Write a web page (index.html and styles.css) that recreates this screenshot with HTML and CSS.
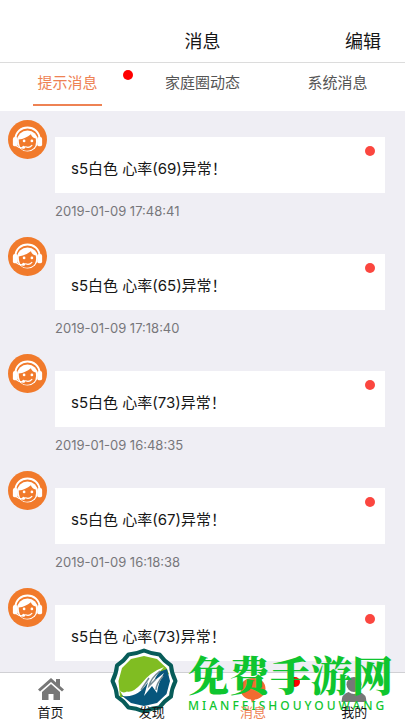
FILE: index.html
```
<!DOCTYPE html>
<html lang="zh-CN">
<head>
<meta charset="utf-8">
<meta name="viewport" content="width=device-width, initial-scale=1">
<title>消息</title>
<link rel="stylesheet" href="styles.css">
</head>
<body>
<svg class="defs" aria-hidden="true">
  <symbol id="agent" viewBox="0 0 40 40">
    <circle cx="20" cy="20" r="20" fill="#f17a2b"/>
    <path d="M7.500 20C8 3.500 32 3.500 32.500 20" fill="none" stroke="#fff" stroke-width="2"/>
    <circle cx="20" cy="21.500" r="10.800" fill="#fff"/>
    <path d="M11 20q7-1 12.500-5.500q1 3.500 5 4.500q1.500 9-4.500 11.500q-5 2-9 0q-4-3-4-10.500z" fill="#f17a2b"/>
    <rect x="5" y="17.500" width="5" height="9.500" rx="2" fill="#fff"/>
    <rect x="30" y="17.500" width="5" height="9.500" rx="2" fill="#fff"/>
    <circle cx="16.500" cy="21.500" r="1.400" fill="#fff"/>
    <circle cx="24.500" cy="21.500" r="1.400" fill="#fff"/>
    <path d="M8 26q3 3 8 2.500M18 27.500q4 1.500 6.500-1.500" fill="none" stroke="#fff" stroke-width="1.200" stroke-linecap="round"/>
    <circle cx="16" cy="28" r="1.600" fill="#fff"/>
  </symbol>
</svg>
<div class="app">
  <header class="header">
    <h1 class="title">消息</h1>
    <button class="edit" type="button">编辑</button>
  </header>
  <nav class="tabs">
    <a class="tab active" href="#tips"><span class="tab-label">提示消息</span><i class="tab-dot"></i></a>
    <a class="tab" href="#family"><span class="tab-label">家庭圈动态</span></a>
    <a class="tab" href="#system"><span class="tab-label">系统消息</span></a>
  </nav>
  <main class="list">
    <article class="item"><svg class="avatar"><use href="#agent"/></svg><div class="body"><p class="card">s5白色 心率(69)异常！<i class="dot"></i></p><time class="time">2019-01-09 17:48:41</time></div></article>
    <article class="item"><svg class="avatar"><use href="#agent"/></svg><div class="body"><p class="card">s5白色 心率(65)异常！<i class="dot"></i></p><time class="time">2019-01-09 17:18:40</time></div></article>
    <article class="item"><svg class="avatar"><use href="#agent"/></svg><div class="body"><p class="card">s5白色 心率(73)异常！<i class="dot"></i></p><time class="time">2019-01-09 16:48:35</time></div></article>
    <article class="item"><svg class="avatar"><use href="#agent"/></svg><div class="body"><p class="card">s5白色 心率(67)异常！<i class="dot"></i></p><time class="time">2019-01-09 16:18:38</time></div></article>
    <article class="item"><svg class="avatar"><use href="#agent"/></svg><div class="body"><p class="card">s5白色 心率(73)异常！<i class="dot"></i></p></div></article>
  </main>
  <nav class="bar">
    <a class="bar-item" href="#home">
      <svg class="bar-icon" viewBox="0 0 28 26"><path d="M14 1L1 12.500l2 2L14 5l11 9.500 2-2-4-3.500V2h-4v3.500z" fill="#777"/><path d="M5 15L14 7l9 8v8h-6.500v-6h-5v6H5z" fill="#777"/></svg>
      <span class="bar-label">首页</span>
    </a>
    <a class="bar-item" href="#discover">
      <span class="bar-icon"></span>
      <span class="bar-label">发现</span>
    </a>
    <a class="bar-item current" href="#messages">
      <svg class="bar-icon" viewBox="0 0 28 26"><path d="M14 1c7 0 12.500 4 12.500 10.500S21 22 16 22.500l-3 3.500-1-3.500C6 22 1.500 18 1.500 11.500S7 1 14 1z" fill="#f26b32"/></svg>
      <span class="bar-label">消息</span><i class="bar-dot"></i>
    </a>
    <a class="bar-item" href="#me">
      <svg class="bar-icon" viewBox="0 0 28 26"><circle cx="14" cy="7.500" r="7.500" fill="#777"/><path d="M1.500 25q0-8 7-10q5.500 4 11 0q7 2 7 10z" fill="#777"/></svg>
      <span class="bar-label">我的</span>
    </a>
  </nav>
  <div class="mark">
    <svg class="mark-logo" viewBox="0 0 68 66">
      <path d="M34 2.500Q42 6 49.500 6.500Q54 13 61 17.500Q61.500 25 65.500 33Q61.500 41 61 48.500Q54 53 49.500 59.500Q42 60 34 63.500Q26 60 18.500 59.500Q14 53 7 48.500Q6.500 41 2.500 33Q6.500 25 7 17.500Q14 13 18.500 6.500Q26 6 34 2.500z" fill="#fff" stroke="#075c59" stroke-width="4" stroke-linejoin="round"/>
      <path d="M34 8L47 11 56.500 20 59 26 45 34 35 49H10L8.500 33 12 20 21 11z" fill="#80bd22"/>
      <path d="M11 47q14 3 22-9 9-13 24-17l3 12-3.500 13L47 55 34 58 21 55z" fill="#07567c"/>
      <path d="M9.500 42Q12 46 17 43.500Q23 45 31 36Q40 24 54 19Q46 27 44 33L54 25Q48 35 47 45L42 38 34 48 38 34Q28 50 13 48z" fill="#fff"/>
      <path d="M50 23q-9 7-11 15l7-7M53 28q-7 8-7 14M39 30l-8 12" fill="none" stroke="#728b93" stroke-width="1.500"/>
    </svg>
    <div class="mark-text"><strong class="mark-name">免费手游网</strong><span class="mark-url">MIANFEISHOUYOUWANG</span></div>
  </div>
</div>
</body>
</html>
```

FILE: styles.css
```
* { box-sizing: border-box; }
body {
  margin: 0;
  font-family: Inter, "Noto Sans CJK SC", sans-serif;
  color: #161616;
  background: #fff;
}
a { color: inherit; text-decoration: none; }
.defs { position: absolute; width: 0; height: 0; }
.app {
  position: relative;
  display: flex;
  flex-direction: column;
  height: 100vh;
  overflow: hidden;
}
.header {
  display: grid;
  grid-template-columns: 1fr auto 1fr;
  align-items: center;
  padding: 18px 24px 0;
  height: 63px;
  flex: none;
  border-bottom: 1px solid #dcdcdc;
}
.title {
  grid-column: 2;
  margin: 0;
  font-size: 18px;
  font-weight: 400;
}
.edit {
  justify-self: end;
  padding: 0;
  border: 0;
  background: none;
  font: inherit;
  font-size: 18px;
  color: inherit;
}
.tabs { display: flex; flex: none; height: 48px; }
.tab {
  position: relative;
  flex: 1;
  display: flex;
  justify-content: center;
  align-items: flex-start;
  font-size: 15px;
  line-height: 40px;
  color: #555;
}
.tab-label { height: 43px; padding: 0 4px; }
.active { color: #ee8253; }
.active .tab-label { border-bottom: 2px solid #ee8253; }
.tab-dot, .dot, .bar-dot {
  position: absolute;
  width: 10px;
  height: 10px;
  border-radius: 50%;
  background: #f00;
}
.tab-dot { top: 7px; right: 2px; }
.list {
  flex: 1;
  min-height: 0;
  overflow: hidden;
  padding: 9px 20px 0 8px;
  background: #efeef4;
}
.item {
  display: flex;
  gap: 8px;
  height: 117px;
}
.avatar { flex: none; width: 39px; height: 39px; }
.body { flex: 1; padding-top: 17px; }
.card {
  position: relative;
  margin: 0;
  height: 56px;
  padding: 4px 16px 0;
  background: #fff;
  font-size: 15px;
  line-height: 56px;
}
.dot { top: 9px; right: 10px; background: #fb463f; }
.time {
  display: block;
  font-size: 13px;
  line-height: 36px;
  color: #77777b;
}
.bar {
  display: flex;
  flex: none;
  height: 48px;
  border-top: 1px solid #d0d0d4;
  background: #fff;
}
.bar-item {
  position: relative;
  flex: 1;
  display: flex;
  flex-direction: column;
  align-items: center;
  padding-top: 4px;
  font-size: 13px;
  line-height: 18px;
}
.bar-icon { flex: none; width: 28px; height: 26px; }
.bar-label { position: relative; z-index: 2; }
.current { color: #ee8253; }
.bar-dot { top: 4px; right: 4px; }
.mark {
  position: absolute;
  z-index: 1;
  right: 12px;
  bottom: 6px;
  display: flex;
  align-items: flex-end;
  gap: 10px;
  pointer-events: none;
}
.mark-logo { width: 68px; height: 66px; }
.mark-text { display: flex; flex-direction: column; color: #0fc52f; }
.mark-name {
  font-family: "Noto Serif CJK SC", "Noto Sans CJK SC", serif;
  font-size: 41px;
  font-weight: 900;
  line-height: 48px;
}
.mark-url {
  font-family: "Noto Sans", sans-serif;
  font-size: 12px;
  font-weight: 500;
  line-height: 16px;
  letter-spacing: 3px;
}
```
